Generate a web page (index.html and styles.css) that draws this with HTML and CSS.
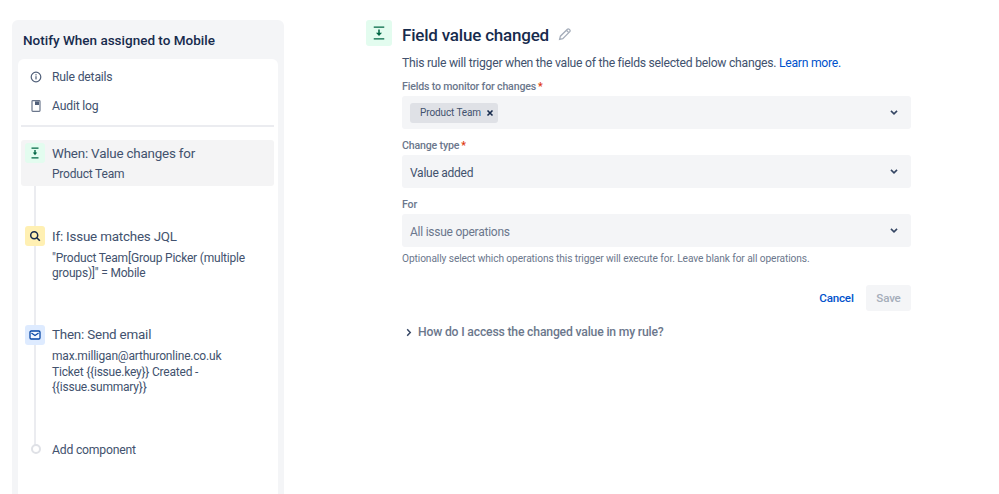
FILE: index.html
```html
<!DOCTYPE html>
<html lang="en">
<head>
<meta charset="utf-8">
<title>Field value changed</title>
<link rel="stylesheet" href="styles.css">
</head>
<body>
<div class="page">
  <aside class="panel">
    <h2 class="rule-name">Notify When assigned to Mobile</h2>
    <div class="card">
      <div class="nav-item nav-first">
        <svg class="nav-icon" viewBox="0 0 12 12" width="12" height="12"><circle cx="6" cy="6" r="4.8" fill="none" stroke="#505f79" stroke-width="1.2"/><rect x="5.4" y="5.2" width="1.2" height="3.2" fill="#505f79"/><rect x="5.4" y="3.2" width="1.2" height="1.2" fill="#505f79"/></svg>
        <span>Rule details</span>
      </div>
      <div class="nav-item">
        <svg class="nav-icon" viewBox="0 0 12 12" width="12" height="12"><rect x="2" y="0.6" width="8" height="10.8" rx="0.8" fill="none" stroke="#6b778c" stroke-width="1.2"/><rect x="5" y="1.4" width="4" height="3.6" fill="#505f79"/></svg>
        <span>Audit log</span>
      </div>
      <div class="divider"></div>
      <div class="timeline">
        <div class="step step-when">
          <span class="badge badge-green">
            <svg viewBox="0 0 12 12" width="12" height="12"><path d="M2.5 1.2h7M2.5 10.8h7" stroke="#006644" stroke-width="1.2" fill="none"/><path d="M6 3v3" stroke="#006644" stroke-width="1.4"/><path d="M3.8 5.6h4.4L6 8.2z" fill="#006644"/></svg>
          </span>
          <div class="step-title">When: Value changes for</div>
          <div class="step-text step-text-gap">Product Team</div>
        </div>
        <div class="step step-if">
          <span class="badge badge-yellow">
            <svg viewBox="0 0 12 12" width="12" height="12"><circle cx="5.2" cy="5.2" r="3.5" fill="none" stroke="#172b4d" stroke-width="1.5"/><path d="M7.8 7.8l3 3" stroke="#172b4d" stroke-width="1.6"/></svg>
          </span>
          <div class="step-title">If: Issue matches JQL</div>
          <div class="step-text step-text-if">"Product Team[Group Picker (multiple groups)]" = Mobile</div>
        </div>
        <div class="step step-then">
          <span class="badge badge-blue">
            <svg viewBox="0 0 12 12" width="12" height="12"><rect x="1" y="2" width="10" height="8" rx="1.2" fill="#f4f8ff" stroke="#0747a6" stroke-width="1.3"/><path d="M2.4 4l3.6 2.5L9.6 4" stroke="#0747a6" stroke-width="1.2" fill="none"/></svg>
          </span>
          <div class="step-title">Then: Send email</div>
          <div class="step-text step-text-mail">max.milligan@arthuronline.co.uk<br>Ticket {{issue.key}} Created - {{issue.summary}}</div>
        </div>
        <div class="step step-add">
          <span class="dot"></span>
          <div class="step-text add-text">Add component</div>
        </div>
      </div>
    </div>
  </aside>

  <main class="main">
    <div class="head">
      <span class="head-icon">
        <svg viewBox="0 0 12 12" width="14" height="14"><path d="M1.5 1h9M1.5 11h9" stroke="#006644" stroke-width="1.1" fill="none"/><path d="M6 3v3.4" stroke="#006644" stroke-width="1.3"/><path d="M3.4 5.8h5.2L6 8.6z" fill="#006644"/></svg>
      </span>
      <div class="head-body">
        <div class="title-row">
          <h1 class="title">Field value changed</h1>
          <svg class="pencil" viewBox="0 0 14 14" width="14" height="14"><path d="M1.6 12.4l.8-3.2 7-7a1.2 1.2 0 0 1 1.7 0l.7.7a1.2 1.2 0 0 1 0 1.7l-7 7z" fill="none" stroke="#a5adba" stroke-width="1.3"/><path d="M8.4 3.2l2.4 2.4" stroke="#a5adba" stroke-width="1.3"/></svg>
        </div>
        <p class="desc">This rule will trigger when the value of the fields selected below changes. <a class="link">Learn more.</a></p>

        <label class="label label-first">Fields to monitor for changes<span class="req">*</span></label>
        <div class="field">
          <span class="tag"><span class="tag-text">Product Team</span>
            <svg class="tag-x" viewBox="0 0 8 8" width="8" height="8"><path d="M1.5 1.5l5 5M6.5 1.5l-5 5" stroke="#172b4d" stroke-width="1.6"/></svg>
          </span>
          <svg class="chev" viewBox="0 0 10 6" width="8" height="5"><path d="M1.2 1l3.8 3.6L8.8 1" fill="none" stroke="#344563" stroke-width="2"/></svg>
        </div>

        <label class="label">Change type<span class="req">*</span></label>
        <div class="field">
          <span class="value">Value added</span>
          <svg class="chev" viewBox="0 0 10 6" width="8" height="5"><path d="M1.2 1l3.8 3.6L8.8 1" fill="none" stroke="#344563" stroke-width="2"/></svg>
        </div>

        <label class="label">For</label>
        <div class="field">
          <span class="value value-muted">All issue operations</span>
          <svg class="chev" viewBox="0 0 10 6" width="8" height="5"><path d="M1.2 1l3.8 3.6L8.8 1" fill="none" stroke="#344563" stroke-width="2"/></svg>
        </div>
        <p class="help">Optionally select which operations this trigger will execute for. Leave blank for all operations.</p>

        <div class="actions">
          <button class="btn btn-link" type="button">Cancel</button>
          <button class="btn btn-save" type="button">Save</button>
        </div>

        <div class="expander">
          <svg class="exp-chev" viewBox="0 0 6 10" width="6" height="9"><path d="M1 1.5l3.4 3.5L1 8.5" fill="none" stroke="#344563" stroke-width="1.6"/></svg>
          <span>How do I access the changed value in my rule?</span>
        </div>
      </div>
    </div>
  </main>
</div>
</body>
</html>
```
FILE: styles.css
```css
* { box-sizing: border-box; }
html, body { margin: 0; padding: 0; background: #fff; }
body {
  font-family: Roboto, "Noto Sans", sans-serif;
  color: #42526e;
  font-size: 12px;
  letter-spacing: -0.2px;
  overflow: hidden;
  height: 494px;
}
.page { display: flex; height: 494px; overflow: hidden; }

.panel {
  width: 272px;
  margin: 20px 0 0 12px;
  padding: 0 6px;
  background: #f4f5f7;
  border-radius: 6px 6px 0 0;
  flex: none;
}
.rule-name {
  margin: 0;
  padding: 11px 5px 0;
  height: 39px;
  font-size: 13.5px;
  line-height: 18px;
  font-weight: 500;
  letter-spacing: 0;
  color: #172b4d;
  white-space: nowrap;
}
.card {
  background: #fff;
  border-radius: 6px 6px 0 0;
  padding: 0 4px 0 3px;
  height: 440px;
}
.nav-item {
  display: flex;
  align-items: center;
  height: 24px;
  padding: 1px 0 0 9px;
  gap: 10px;
  color: #42526e;
  font-size: 12.2px;
}
.nav-first { height: 34px; }
.nav-icon { flex: none; }
.divider { height: 2px; background: #ebecf0; margin-top: 8px; }

.timeline { position: relative; margin-top: 13px; }
.timeline::before {
  content: "";
  position: absolute;
  left: 13px;
  top: 20px;
  height: 285px;
  width: 2px;
  background: #ebecf0;
}
.step { position: relative; padding-left: 31px; }
.step-when {
  height: 46px;
  background: #f4f4f5;
  border-radius: 3px;
  padding-top: 4px;
}
.step-when .badge { top: 3px; }
.step-if { margin-top: 40px; height: 99px; padding-top: 1px; }
.step-then { height: 117px; padding-top: 1px; }
.step-then .step-title { margin-top: -1px; }
.step-add { height: 30px; padding-top: 1px; }
.badge {
  position: absolute;
  left: 4px;
  top: 0;
  width: 20px;
  height: 20px;
  border-radius: 3px;
  display: flex;
  align-items: center;
  justify-content: center;
}
.badge-green { background: #e3fcef; }
.badge-yellow { background: #fff0b3; }
.badge-blue { background: #deebff; }
.step-title { font-size: 13.4px; line-height: 20px; color: #42526e; white-space: nowrap; }
.step-text { font-size: 12px; line-height: 15.5px; color: #42526e; margin-top: 3px; }
.step-text-gap { margin-top: 3px; }
.step-text-if { margin-top: 4px; line-height: 15px; }
.step-text-mail { margin-top: 4px; }
.dot {
  position: absolute;
  left: 10px;
  top: 2px;
  width: 10px;
  height: 10px;
  border-radius: 50%;
  background: #fff;
  border: 2px solid #dfe1e6;
}
.add-text { margin-top: 0; font-size: 12.2px; line-height: 15px; }

.main { flex: 1; padding: 20px 0 0 82px; min-width: 0; }
.head { display: flex; align-items: flex-start; }
.head-icon {
  flex: none;
  width: 26px;
  height: 26px;
  border-radius: 3px;
  background: #e3fcef;
  display: flex;
  align-items: center;
  justify-content: center;
}
.head-body { width: 509px; margin-left: 10px; }
.title-row { display: flex; align-items: center; height: 28px; padding-top: 1px; gap: 9px; }
.title { margin: 0; font-size: 17px; line-height: 26px; font-weight: 500; color: #172b4d; white-space: nowrap; }
.pencil { flex: none; margin-top: -1px; }
.desc { margin: 5px 0 0; font-size: 12.2px; line-height: 20px; letter-spacing: -0.26px; color: #42526e; white-space: nowrap; }
.link { color: #0052cc; }
.label {
  display: block;
  height: 14px;
  font-size: 10.6px;
  line-height: 14px;
  font-weight: 500;
  letter-spacing: -0.17px;
  color: #6b778c;
  white-space: nowrap;
}
.label-first { margin-top: 6px; height: 15px; line-height: 15px; }
.label + .field { margin-top: 2px; }
.req { color: #de350b; margin-left: 2px; }
.field {
  height: 33px;
  background: #f4f5f7;
  border-radius: 3px;
  display: flex;
  align-items: center;
  justify-content: space-between;
  padding: 0 13px 0 8px;
}
.field + .label { margin-top: 10px; }
.tag {
  display: inline-flex;
  align-items: center;
  justify-content: space-between;
  height: 20px;
  width: 88px;
  padding: 0 4px 0 10px;
  background: #dfe1e6;
  border-radius: 3px;
  font-size: 10px;
  letter-spacing: -0.1px;
  color: #42526e;
  white-space: nowrap;
}
.tag-x { flex: none; }
.value { font-size: 12px; letter-spacing: -0.25px; padding-top: 2px; color: #42526e; }
.value-muted { color: #6b778c; }
.chev { flex: none; }
.help { margin: 5px 0 0; font-size: 10.2px; line-height: 14px; letter-spacing: -0.1px; color: #6b778c; white-space: nowrap; }
.actions { display: flex; justify-content: flex-end; align-items: center; gap: 12px; margin-top: 19px; }
.btn {
  height: 26px;
  border: 0;
  border-radius: 3px;
  font: 500 11.6px Roboto, "Noto Sans", sans-serif;
  letter-spacing: -0.2px;
  padding: 0;
}
.btn-link { background: none; color: #0052cc; width: 35px; }
.btn-save { background: #f4f5f7; color: #a5adba; width: 45px; }
.expander {
  display: flex;
  align-items: center;
  gap: 6px;
  margin-top: 12px;
  padding-left: 4px;
  height: 18px;
  font-size: 12.2px;
  font-weight: 500;
  letter-spacing: -0.18px;
  color: #6b778c;
  white-space: nowrap;
}
.exp-chev { flex: none; }
```
